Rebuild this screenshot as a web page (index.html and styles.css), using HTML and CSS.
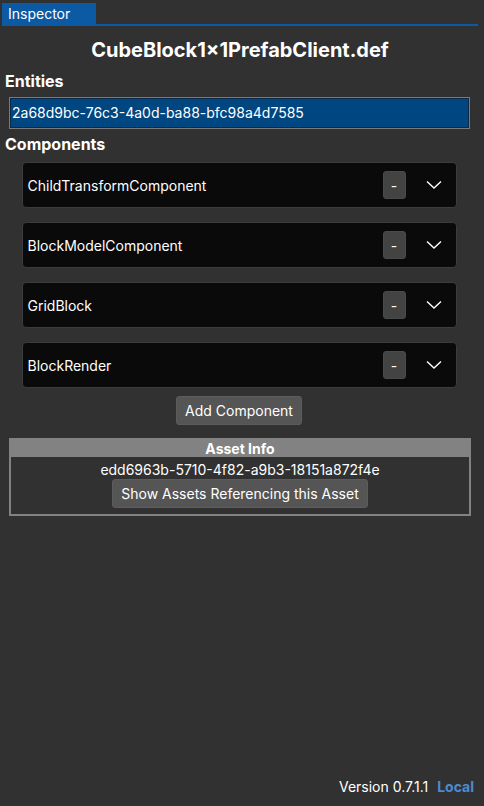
FILE: index.html
```html
<!DOCTYPE html>
<html lang="en">
<head>
  <meta charset="UTF-8">
  <meta name="viewport" content="width=device-width, initial-scale=1.0">
  <title>Inspector</title>
  <link rel="stylesheet" href="styles.css">
</head>
<body>
  <div id="panel">
    <div class="tab-bar">
      <span class="tab">Inspector</span>
    </div>

    <h1 class="title">CubeBlock1×1PrefabClient.def</h1>

    <h2 class="section entities-title">Entities</h2>
    <div class="entity-box">2a68d9bc-76c3-4a0d-ba88-bfc98a4d7585</div>

    <h2 class="section comps-title">Components</h2>
    <div class="components">
      <div class="comp">
        <span class="comp-name">ChildTransformComponent</span>
        <button class="remove-btn">-</button>
        <svg class="chevron" width="16" height="10" viewBox="0 0 16 10"><path d="M1 1.5 L8 8 L15 1.5" fill="none" stroke="#fff" stroke-width="1.4"/></svg>
      </div>
      <div class="comp">
        <span class="comp-name">BlockModelComponent</span>
        <button class="remove-btn">-</button>
        <svg class="chevron" width="16" height="10" viewBox="0 0 16 10"><path d="M1 1.5 L8 8 L15 1.5" fill="none" stroke="#fff" stroke-width="1.4"/></svg>
      </div>
      <div class="comp">
        <span class="comp-name">GridBlock</span>
        <button class="remove-btn">-</button>
        <svg class="chevron" width="16" height="10" viewBox="0 0 16 10"><path d="M1 1.5 L8 8 L15 1.5" fill="none" stroke="#fff" stroke-width="1.4"/></svg>
      </div>
      <div class="comp">
        <span class="comp-name">BlockRender</span>
        <button class="remove-btn">-</button>
        <svg class="chevron" width="16" height="10" viewBox="0 0 16 10"><path d="M1 1.5 L8 8 L15 1.5" fill="none" stroke="#fff" stroke-width="1.4"/></svg>
      </div>
      <button class="btn add-btn">Add Component</button>
    </div>

    <div class="asset-info">
      <div class="asset-head">Asset Info</div>
      <div class="asset-id">edd6963b-5710-4f82-a9b3-18151a872f4e</div>
      <button class="btn ref-btn">Show Assets Referencing this Asset</button>
    </div>

    <div class="footer">
      <span class="version">Version 0.7.1.1</span>
      <span class="local">Local</span>
    </div>
  </div>
</body>
</html>
```

FILE: styles.css
```css
html, body {
  margin: 0;
  padding: 0;
  height: 100%;
}

body {
  background-color: #313131;
  font-family: Inter, Roboto, "Liberation Sans", Arial, sans-serif;
  color: #fff;
}

#panel {
  height: 806px;
  box-sizing: border-box;
  padding: 3px 6px 0 2px;
  display: flex;
  flex-direction: column;
}

.tab-bar {
  border-bottom: 2px solid #0b5aa3;
  display: flex;
}

.tab {
  background-color: #0b5aa3;
  color: #fff;
  font-size: 14px;
  line-height: 21px;
  padding: 0 26px 0 6px;
}

.title {
  margin: 12px 0 0;
  text-align: center;
  font-size: 20px;
  font-weight: bold;
  line-height: 24px;
}

.section {
  margin: 0 0 0 3px;
  font-size: 16px;
  font-weight: bold;
  line-height: 22px;
}

.entities-title {
  margin-top: 8px;
}

.comps-title {
  margin-top: 4px;
}

.entity-box {
  margin: 5px 0 0 7px;
  width: 461px;
  height: 32px;
  box-sizing: border-box;
  background-color: #004681;
  border: 1px solid #7a7a7a;
  box-shadow: inset 0 0 0 1px #0c2a48;
  font-size: 14px;
  line-height: 30px;
  padding-left: 2px;
}

.components {
  display: flex;
  flex-direction: column;
  align-items: center;
  gap: 14px;
  margin-top: 7px;
  padding-right: 2px;
}

.comp {
  width: 435px;
  height: 46px;
  box-sizing: border-box;
  background-color: #0a0a0a;
  border: 1px solid #3c3c3c;
  border-radius: 4px;
  display: flex;
  align-items: center;
  padding: 0 14px 0 5px;
}

.comp-name {
  flex: 1;
  font-size: 14px;
}

.remove-btn {
  width: 23px;
  height: 28px;
  background-color: #434343;
  border: 1px solid #4a4a4a;
  border-radius: 3px;
  color: #fff;
  font-family: inherit;
  font-size: 14px;
  padding: 0;
  margin-right: 20px;
}

.btn {
  background-color: #555;
  color: #fff;
  border: 1px solid #5c5c5c;
  border-radius: 3px;
  font-family: inherit;
  font-size: 14px;
  padding: 0 8px;
  height: 29px;
}

.add-btn {
  margin-top: -6px;
}

.asset-info {
  margin: 13px 0 0 7px;
  width: 462px;
  box-sizing: border-box;
  border: 2px solid #828282;
  display: flex;
  flex-direction: column;
  align-items: center;
  padding-bottom: 6px;
}

.asset-head {
  align-self: stretch;
  background-color: #828282;
  text-align: center;
  font-size: 14px;
  font-weight: bold;
  line-height: 17px;
}

.asset-id {
  font-size: 14px;
  line-height: 20px;
  margin-top: 3px;
}

.ref-btn {
  height: 29px;
  margin-top: -1px;
}

.footer {
  margin-top: auto;
  margin-bottom: 11px;
  text-align: right;
  font-size: 14px;
  padding-right: 4px;
}

.local {
  color: #4c8bd1;
  font-weight: bold;
  margin-left: 5px;
}
```
